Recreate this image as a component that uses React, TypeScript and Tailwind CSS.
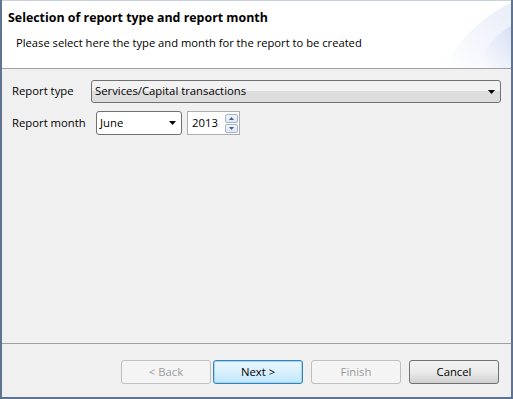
import React from 'react';

const font = { fontFamily: '"Open Sans", "Noto Sans", sans-serif' };

function Caret() {
  return (
    <svg width="7" height="4" viewBox="0 0 7 4" className="shrink-0">
      <path d="M0 0h7L3.5 4z" fill="#000" />
    </svg>
  );
}

function WizardButton({ label, kind }: { label: string; kind: 'disabled' | 'default' | 'normal' }) {
  const cls =
    kind === 'disabled'
      ? 'border-[#bfbfbf] bg-[#f4f4f4] text-[#9c9c9c]'
      : kind === 'default'
        ? 'border-[#3c7fb1] bg-gradient-to-b from-[#eaf6fd] via-[#d9f0fc] to-[#bee6fd] text-black shadow-[inset_0_0_0_1px_#9ad7f8]'
        : 'border-[#707070] bg-gradient-to-b from-[#f2f2f2] via-[#ebebeb] to-[#cfcfcf] text-black';
  return (
    <button className={`w-[90px] h-[24px] rounded-[3px] border text-[11.3px] flex items-center justify-center ${cls}`}>
      {label}
    </button>
  );
}

export default function App() {
  return (
    <div style={font} className="w-[513px] h-[399px] bg-[#5f7490] pt-0 pb-[2px] pr-[2px] pl-[2px]">
      <div className="w-full h-full flex flex-col bg-[#f0f0f0] border-t border-[#c9d3df]">
        {/* Header */}
        <div className="relative h-[68px] bg-white border-b border-[#a0a0a0] overflow-hidden shrink-0">
          <svg className="absolute right-0 top-0" width="110" height="68" viewBox="0 0 110 68">
            <defs>
              <linearGradient id="g1" x1="0" y1="1" x2="1" y2="0">
                <stop offset="0" stopColor="#ffffff" />
                <stop offset="1" stopColor="#e8edf8" />
              </linearGradient>
              <linearGradient id="g2" x1="0" y1="1" x2="1" y2="0">
                <stop offset="0" stopColor="#ffffff" />
                <stop offset="1" stopColor="#d8e0f3" />
              </linearGradient>
            </defs>
            <path d="M40 68 C58 40 80 15 110 2 L110 68 Z" fill="url(#g1)" />
            <path d="M72 68 C82 50 95 33 110 25 L110 68 Z" fill="url(#g2)" />
          </svg>
          <div className="relative pl-[6px] pt-[8px] text-[12.4px] font-bold text-black leading-[18px]">
            Selection of report type and report month
          </div>
          <div className="relative pl-[14px] pt-[8px] text-[11.2px] text-black leading-[16px]">
            Please select here the type and month for the report to be created
          </div>
        </div>

        {/* Body */}
        <div className="flex-1 flex flex-col gap-[8px] pl-[10px] pr-[10px] pt-[11px] text-[11.3px] text-black">
          <div className="flex items-center h-[23px]">
            <span className="w-[79px]">Report type</span>
            <div className="flex-1 h-[23px] rounded-[3px] border border-[#707070] bg-gradient-to-b from-[#f2f2f2] from-45% to-[#dddddd] to-50% flex items-center pl-[3px] pr-[5px] justify-between">
              <span>Services/Capital transactions</span>
              <Caret />
            </div>
          </div>
          <div className="flex items-center h-[24px]">
            <span className="w-[84px]">Report month</span>
            <div className="w-[86px] h-[24px] rounded-[3px] border border-[#707070] bg-white flex items-center pl-[3px] pr-[5px] justify-between">
              <span>June</span>
              <Caret />
            </div>
            <div className="ml-[5px] w-[53px] h-[24px] border border-[#abadb3] bg-white flex items-center pl-[4px] pr-[1px] justify-between">
              <span>2013</span>
              <div className="flex flex-col gap-[1px]">
                <div className="w-[13px] h-[9px] border border-[#a6b5cb] rounded-[2px] bg-gradient-to-b from-[#f2f6fb] to-[#dfe7f2] flex items-center justify-center">
                  <svg width="5" height="3" viewBox="0 0 5 3"><path d="M0 3h5L2.5 0z" fill="#4d6185" /></svg>
                </div>
                <div className="w-[13px] h-[9px] border border-[#a6b5cb] rounded-[2px] bg-gradient-to-b from-[#f2f6fb] to-[#dfe7f2] flex items-center justify-center">
                  <svg width="5" height="3" viewBox="0 0 5 3"><path d="M0 0h5L2.5 3z" fill="#4d6185" /></svg>
                </div>
              </div>
            </div>
          </div>
        </div>

        {/* Footer */}
        <div className="h-[54px] shrink-0 border-t border-[#a0a0a0] flex items-start justify-end gap-[8px] pr-[12px] pt-[16px]">
          <div className="flex gap-[2px]">
            <WizardButton label="< Back" kind="disabled" />
            <WizardButton label="Next >" kind="default" />
          </div>
          <WizardButton label="Finish" kind="disabled" />
          <WizardButton label="Cancel" kind="normal" />
        </div>
      </div>
    </div>
  );
}
